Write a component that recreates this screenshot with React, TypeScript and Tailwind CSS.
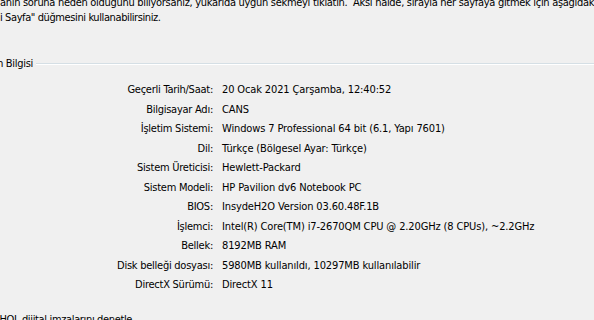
const rows: [string, string][] = [
  ['Geçerli Tarih/Saat:', '20 Ocak 2021 Çarşamba, 12:40:52'],
  ['Bilgisayar Adı:', 'CANS'],
  ['İşletim Sistemi:', 'Windows 7 Professional 64 bit (6.1, Yapı 7601)'],
  ['Dil:', 'Türkçe (Bölgesel Ayar: Türkçe)'],
  ['Sistem Üreticisi:', 'Hewlett-Packard'],
  ['Sistem Modeli:', 'HP Pavilion dv6 Notebook PC'],
  ['BIOS:', 'InsydeH2O Version 03.60.48F.1B'],
  ['İşlemci:', 'Intel(R) Core(TM) i7-2670QM CPU @ 2.20GHz (8 CPUs), ~2.2GHz'],
  ['Bellek:', '8192MB RAM'],
  ['Disk belleği dosyası:', '5980MB kullanıldı, 10297MB kullanılabilir'],
  ['DirectX Sürümü:', 'DirectX 11'],
]

export default function App() {
  return (
    <div className="w-[594px] h-[320px] overflow-hidden bg-[#f0f0f0] text-black text-[11px] font-['DejaVu_Sans_Condensed','DejaVu_Sans',sans-serif]">
      {/* intro text, window cropped on the left */}
      <div className="-mt-[5px] leading-[15px] whitespace-nowrap">
        <div className="tracking-[-0.3px]">anın soruna neden olduğunu biliyorsanız, yukarıda uygun sekmeyi tıklatın.&nbsp; Aksi halde, sırayla her sayfaya gitmek için aşağıdaki</div>
        <div className="tracking-[-0.4px]">i Sayfa" düğmesini kullanabilirsiniz.</div>
      </div>

      {/* Sistem Bilgisi group */}
      <div className="mt-[32px] flex items-center whitespace-nowrap">
        <span className="-ml-[29px] leading-[14px] tracking-[-0.3px]">Sistem Bilgisi</span>
        <div className="flex-1 ml-[3px] border-t border-t-[#d5dfe5] border-b border-b-white" />
      </div>

      <div className="mt-[9px] grid grid-cols-[213px_1fr] gap-x-[9px] whitespace-nowrap">
        {rows.map(([label, value]) => (
          <div key={label} className="contents">
            <div className="text-right leading-[19.5px] tracking-[-0.25px]">{label}</div>
            <div className="leading-[19.5px] tracking-[-0.13px]">{value}</div>
          </div>
        ))}
      </div>

      <div className="mt-[17px] -ml-[10px] whitespace-nowrap leading-[15px] tracking-[-0.35px]">WHQL dijital imzalarını denetle</div>
    </div>
  )
}
